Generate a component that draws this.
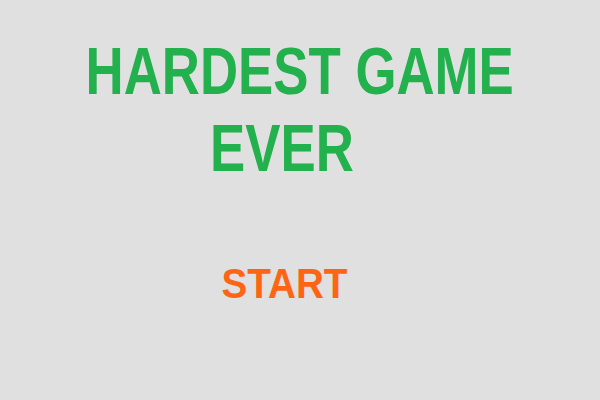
export default function App() {
  return (
    <div className="h-[400px] w-[600px] bg-[#e0e0e0] font-['Liberation_Sans',Arial,sans-serif] font-bold">
      <div className="pt-[33px] text-[66px] leading-[77px] text-[#22b14c]">
        <div className="text-center">
          <span className="inline-block scale-x-[0.8]">HARDEST GAME</span>
        </div>
        <div className="text-center pr-[37px]">
          <span className="inline-block scale-x-[0.8]">EVER</span>
        </div>
      </div>
      <div className="mt-[73px] pr-[31px] text-center text-[42px] leading-[48px] text-[#ff6414]">
        <span className="inline-block scale-x-[0.92]">START</span>
      </div>
    </div>
  );
}
